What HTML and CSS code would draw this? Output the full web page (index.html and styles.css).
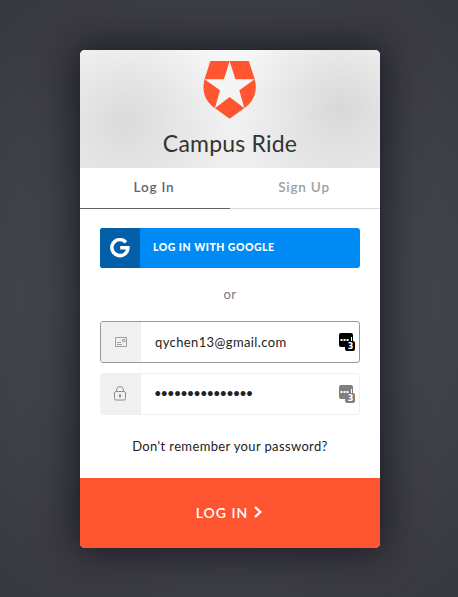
FILE: index.html
```html
<!DOCTYPE html>
<html lang="en">
<head>
<meta charset="utf-8">
<title>Campus Ride</title>
<link rel="stylesheet" href="styles.css">
</head>
<body>
<main class="card">
  <header class="header">
    <svg class="logo" viewBox="0 0 54 58"><path fill="#ff5530" d="M7.400 0H45.800L51.800 18.300C54.500 29 52 40 41.200 47.200L26.600 57.800L12.100 47.200C1.200 40 -1.200 29 1.500 18.300Z"/><path fill="#f4f4f4" d="M26.600 0L32.400 18.300H51.700L36.300 29.300L41.400 47.200L26.600 36L11.900 47.200L17 29.300L1.500 18.300H20.900Z"/></svg>
    <h1 class="title">Campus Ride</h1>
  </header>
  <nav class="tabs"><a class="tab tab-current">Log In</a><a class="tab tab-signup">Sign Up</a></nav>
  <div class="content">
    <button class="google"><span class="google-icon"><svg width="20" height="20" viewBox="0 0 20 20" fill="none" stroke="#fff" stroke-width="3.500"><path d="M15.900 4.300A8 8 0 1 0 17.900 9.700H10.200"/></svg></span><span class="google-label">LOG IN WITH GOOGLE</span></button>
    <p class="or">or</p>
    <div class="field field-focus">
      <span class="field-icon"><svg width="12" height="10" viewBox="0 0 12 10" fill="none" stroke="#a0a0a0"><path d="M.5.5H11.500V9.500H.5ZM2 5.500H6M2 7.500H7M7.500 2.500H10V4.500H7.500Z"/></svg></span>
      <span class="value email">qychen13@gmail.com</span>
      <svg class="manager" width="17" height="18" viewBox="0 0 17 18"><rect width="14" height="14" rx="2"/><rect x="6" y="8" width="10" height="10" rx="2"/><path d="M1.500 6h2v2h-2zM4.500 6h2v2h-2zM7.500 6h2v2h-2zM12 4h1v4h-1z" fill="#fff"/><text x="11.500" y="16.200" class="count">3</text></svg>
    </div>
    <div class="field">
      <span class="field-icon"><svg class="lock" width="13" height="15" viewBox="0 0 13 15" fill="none" stroke="#909090"><rect x=".5" y="5.500" width="11" height="8.500" rx="1.500"/><path d="M2.500 5.500V4Q2.500.5 6 .5T9.500 4V5.500M5.500 8.500h1v2.500h-1z"/></svg></span>
      <span class="value password">•••••••••••••••</span>
      <svg class="manager manager-muted" width="17" height="18" viewBox="0 0 17 18"><rect width="14" height="14" rx="2"/><rect x="6" y="8" width="10" height="10" rx="2"/><path d="M1.500 6h2v2h-2zM4.500 6h2v2h-2zM7.500 6h2v2h-2zM12 4h1v4h-1z" fill="#fff"/><text x="11.500" y="16.200" class="count">3</text></svg>
    </div>
    <a class="forgot">Don't remember your password?</a>
  </div>
  <button class="submit"><span class="submit-label">LOG IN</span><svg width="8" height="12" viewBox="0 0 8 12" fill="none" stroke="#fff" stroke-width="2.300"><path d="M1 1L6.300 6L1 11"/></svg></button>
</main>
</body>
</html>
```
FILE: styles.css
```css
* { box-sizing: border-box; }
body { margin: 0; height: 597px; padding: 50px 80px; background: radial-gradient(circle at 50% 50%, #50505a, #37373e); font-family: Lato, sans-serif; }
.card { width: 300px; height: 498px; display: flex; flex-direction: column; background: #fff; border-radius: 5px; overflow: hidden; box-shadow: 0 0 40px 4px rgba(10,10,18,.72); }
.header { height: 118px; flex: none; padding-top: 11px; display: flex; flex-direction: column; align-items: center; background: radial-gradient(circle at 15% 60%, #dadada, rgba(218,218,218,.6) 40px, rgba(218,218,218,0) 105px), radial-gradient(circle at 87% 50%, #d8d8d8, rgba(216,216,216,.6) 40px, rgba(216,216,216,0) 105px), linear-gradient(#f6f6f6, #eee); }
.logo { width: 54px; height: 58px; }
.title { margin: 10px 0 0; font-size: 23px; line-height: 28px; font-weight: 400; color: #333; letter-spacing: .2px; white-space: nowrap; }
.tabs { height: 41px; flex: none; display: flex; }
.tab { flex: 1; padding-right: 2px; line-height: 39px; text-align: center; font-size: 13.500px; font-weight: 600; letter-spacing: .8px; color: #5c666f; border-bottom: 1px solid #5c666f; }
.tab-signup { color: #9d9ea1; border-color: #d9dbdb; }
.content { flex: 1; padding: 19px 20px 0; display: flex; flex-direction: column; }
button { border: 0; padding: 0; font-family: inherit; color: #fff; }
.google { height: 40px; flex: none; display: flex; background: #008af3; border-radius: 3px; overflow: hidden; }
.google-icon { width: 40px; height: 40px; display: grid; place-items: center; background: #005fa6; }
.google-label { margin-left: 13px; line-height: 39px; font-size: 10.500px; font-weight: 900; letter-spacing: .5px; }
.or { margin: 16px 0 17px; line-height: 20px; text-align: center; font-size: 13px; color: #7c7c7c; letter-spacing: .5px; }
.field { height: 42px; flex: none; display: flex; align-items: center; border: 1px solid #f0f0f0; border-radius: 3px; overflow: hidden; }
.field-focus { border-color: #999; margin-bottom: 10px; }
.field-icon { width: 40px; height: 40px; display: grid; place-items: center; background: #f0f0f0; }
.lock { margin: 0 2px 2px 0; }
.value { flex: 1; margin-left: 14px; color: #222; font-size: 13px; letter-spacing: .38px; }
.password { margin-left: 13px; padding-bottom: 2px; letter-spacing: -.98px; }
.manager { margin-right: 3px; fill: #000; }
.manager-muted { fill: #808080; }
.count { font: bold 8px "DejaVu Sans", sans-serif; text-anchor: middle; fill: #fff; }
.forgot { margin-top: 20px; line-height: 22px; text-align: center; font-size: 13px; color: #222; letter-spacing: .36px; white-space: nowrap; }
.submit { height: 70px; flex: none; padding: 0 2px 2px 0; display: flex; align-items: center; justify-content: center; gap: 6px; background: #fe5530; }
.submit-label { font-size: 14px; font-weight: 600; letter-spacing: 1px; }
```
